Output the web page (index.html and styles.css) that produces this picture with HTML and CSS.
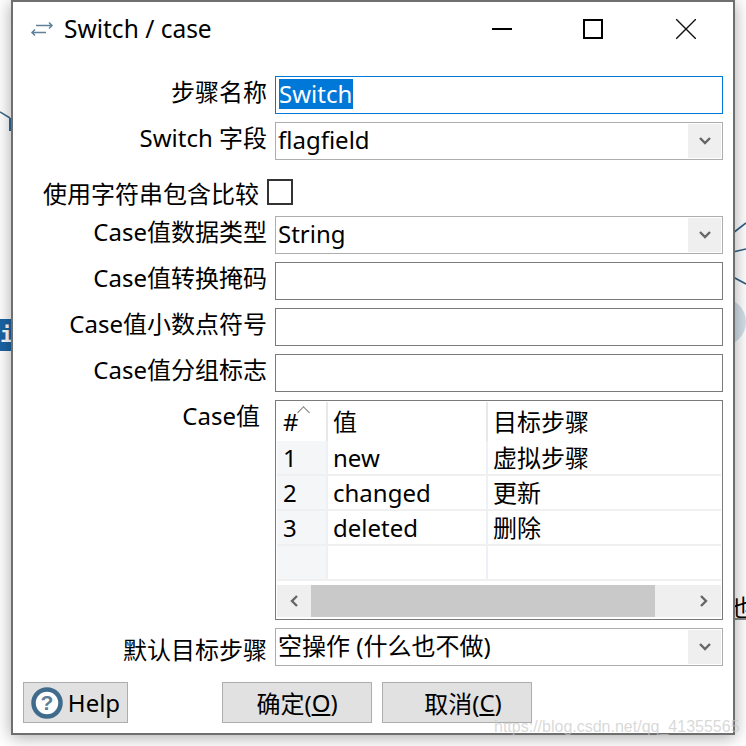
FILE: index.html
```html
<!DOCTYPE html>
<html lang="zh">
<head>
  <meta charset="UTF-8">
  <meta name="viewport" content="width=device-width, initial-scale=1.0">
  <title>Switch / case</title>
  <link rel="stylesheet" href="styles.css">
</head>
<body>
  <!-- bits of the canvas behind the dialog -->
  <svg class="canvas-lines" width="746" height="746" viewBox="0 0 746 746">
    <path d="M0 112 L10 118" stroke="#3d6a8c" stroke-width="1.5" fill="none"/>
    <rect x="9" y="118" width="3" height="13" fill="#2f6a96"/>
    <path d="M733 233 L746 223 M733 252 L746 249 M733 277 L746 284" stroke="#2f5f85" stroke-width="1.6" fill="none"/>
    <circle cx="722" cy="322" r="24" fill="#d3dfe8"/>
    <path d="M733 619 H746" stroke="#111" stroke-width="1"/>
  </svg>
  <div class="info-badge">i</div>
  <div class="canvas-label">也</div>

  <div class="dialog">
    <div class="title-bar">
      <svg class="title-icon" width="24" height="16" viewBox="0 0 24 16">
        <path d="M16 11.5 H2 M5 8.5 L2 11.5 L5 14.5" stroke="#5f8199" stroke-width="1.5" fill="none"/>
        <path d="M6 4.5 H22 M19 1.5 L22 4.5 L19 7.5" stroke="#5f8199" stroke-width="1.5" fill="none"/>
      </svg>
      <span class="title-text">Switch / case</span>
      <div class="win-buttons">
        <svg width="20" height="20" viewBox="0 0 20 20"><path d="M0 10 H20" stroke="#000" stroke-width="2"/></svg>
        <svg width="20" height="20" viewBox="0 0 20 20"><rect x="1" y="1" width="18" height="18" stroke="#000" stroke-width="2" fill="none"/></svg>
        <svg class="win-close" width="20" height="20" viewBox="0 0 20 20"><path d="M0 0 L20 20 M20 0 L0 20" stroke="#111" stroke-width="1.4"/></svg>
      </div>
    </div>

    <div class="form">
      <label class="form-label">步骤名称</label>
      <div class="field focused"><span class="selected-text">Switch</span></div>

      <label class="form-label">Switch 字段</label>
      <div class="field combo">flagfield<span class="combo-btn"><svg width="12" height="10" viewBox="0 0 12 10"><path d="M1 2 L6 7 L11 2" stroke="#666" stroke-width="2.4" fill="none"/></svg></span></div>

      <div class="check-row">
        <span>使用字符串包含比较</span>
        <span class="checkbox"></span>
      </div>

      <label class="form-label">Case值数据类型</label>
      <div class="field combo">String<span class="combo-btn"><svg width="12" height="10" viewBox="0 0 12 10"><path d="M1 2 L6 7 L11 2" stroke="#666" stroke-width="2.4" fill="none"/></svg></span></div>

      <label class="form-label">Case值转换掩码</label>
      <div class="field plain"></div>

      <label class="form-label">Case值小数点符号</label>
      <div class="field plain"></div>

      <label class="form-label">Case值分组标志</label>
      <div class="field plain"></div>

      <label class="form-label table-label">Case值</label>
      <div class="table-box">
        <table class="grid">
          <colgroup><col class="col-num"><col class="col-val"><col></colgroup>
          <thead>
            <tr><th class="sorted">#</th><th>值</th><th>目标步骤</th></tr>
          </thead>
          <tbody>
            <tr><td>1</td><td>new</td><td>虚拟步骤</td></tr>
            <tr><td>2</td><td>changed</td><td>更新</td></tr>
            <tr><td>3</td><td>deleted</td><td>删除</td></tr>
            <tr><td></td><td></td><td></td></tr>
          </tbody>
        </table>
        <div class="scrollbar">
          <span class="scroll-btn"><svg width="10" height="14" viewBox="0 0 10 14"><path d="M8 2 L3 7 L8 12" stroke="#666" stroke-width="2.4" fill="none"/></svg></span>
          <span class="scroll-thumb"></span>
          <span class="scroll-btn right"><svg width="10" height="14" viewBox="0 0 10 14"><path d="M2 2 L7 7 L2 12" stroke="#666" stroke-width="2.4" fill="none"/></svg></span>
        </div>
      </div>

      <label class="form-label default-label">默认目标步骤</label>
      <div class="field combo">空操作 (什么也不做)<span class="combo-btn"><svg width="12" height="10" viewBox="0 0 12 10"><path d="M1 2 L6 7 L11 2" stroke="#666" stroke-width="2.4" fill="none"/></svg></span></div>
    </div>

    <div class="button-bar">
      <button class="btn btn-help">
        <svg width="32" height="32" viewBox="0 0 32 32">
          <circle cx="16" cy="16" r="13.5" fill="#fff" stroke="#3f6b8c" stroke-width="4.5"/>
          <text x="16" y="23" text-anchor="middle" class="help-mark">?</text>
        </svg>
        Help
      </button>
      <button class="btn btn-main">确定(<u>O</u>)</button>
      <button class="btn btn-main btn-cancel">取消(<u>C</u>)</button>
    </div>
  </div>

  <div class="watermark">https://blog.csdn.net/qq_41355565</div>
</body>
</html>
```

FILE: styles.css
```css
html, body {
  margin: 0;
  padding: 0;
}
body {
  width: 746px;
  height: 746px;
  overflow: hidden;
  background: #fff;
  font-family: "Noto Sans", "Noto Sans CJK SC", sans-serif;
  font-size: 24px;
  color: #000;
  position: relative;
}
.canvas-lines {
  position: absolute;
  left: 0;
  top: 0;
}
.info-badge {
  position: absolute;
  left: 0;
  top: 319px;
  width: 12px;
  height: 32px;
  background: #1b64a5;
  color: #fff;
  font-family: "DejaVu Sans Mono", monospace;
  font-weight: bold;
  font-size: 22px;
  line-height: 32px;
  text-align: center;
}
.canvas-label {
  position: absolute;
  left: 731px;
  top: 592px;
  font-size: 23px;
  line-height: 30px;
}
.dialog {
  position: relative;
  box-sizing: border-box;
  width: 724px;
  height: 735px;
  margin-left: 11px;
  background: #fff;
  border: 2px solid #6f6f6f;
  box-shadow: 0 2px 16px rgba(0, 0, 0, 0.35);
  display: flex;
  flex-direction: column;
}
.title-bar {
  display: flex;
  align-items: center;
  height: 54px;
  padding-left: 17px;
}
.title-icon {
  margin-right: 10px;
}
.title-text {
  font-size: 24.5px;
  line-height: 54px;
}
.win-buttons {
  margin-left: auto;
  margin-right: 37px;
  display: flex;
  gap: 71px;
}
.win-close {
  margin-left: 2px;
}
.form {
  display: grid;
  grid-template-columns: 252px 448px;
  row-gap: 8px;
  margin-top: 20px;
  padding-left: 10px;
}
.form-label {
  text-align: right;
  padding-right: 8px;
  line-height: 32px;
  white-space: nowrap;
}
.default-label {
  padding-top: 6px;
}
.field {
  box-sizing: border-box;
  height: 38px;
  border: 1px solid #adadad;
  line-height: 33px;
  padding-left: 3px;
  position: relative;
}
.field.combo {
  padding-left: 2px;
}
.field.focused {
  border-color: #0078d7;
  line-height: 34px;
}
.field.plain {
  border-color: #7a7a7a;
}
.selected-text {
  display: inline-block;
  background: #0078d7;
  color: #fff;
  line-height: 30px;
  vertical-align: top;
  margin-top: 2px;
  padding-right: 1px;
}
.combo-btn {
  position: absolute;
  right: 1px;
  top: 1px;
  bottom: 1px;
  width: 33px;
  background: #efefef;
  display: flex;
  align-items: center;
  justify-content: center;
}
.check-row {
  box-sizing: border-box;
  grid-column: 1 / 3;
  height: 40px;
  padding-top: 8px;
  padding-left: 20px;
  display: flex;
  align-items: center;
  gap: 8px;
}
.checkbox {
  box-sizing: border-box;
  width: 26px;
  height: 26px;
  border: 2px solid #333;
}
.table-label {
  padding-right: 15px;
}
.table-box {
  box-sizing: border-box;
  height: 220px;
  border: 1px solid #7a7a7a;
  padding: 1px;
}
.grid {
  width: 100%;
  height: 179px;
  table-layout: fixed;
  border-collapse: collapse;
  margin-bottom: 4px;
}
.col-num {
  width: 50px;
}
.col-val {
  width: 160px;
}
.grid th, .grid td {
  font-weight: normal;
  text-align: left;
  padding: 1px 0 0 5px;
  white-space: nowrap;
  border-right: 2px solid #edf1f6;
  border-bottom: 2px solid #f0f0f0;
  height: 32px;
  line-height: 32px;
}
.grid td:first-child, .grid th:first-child {
  padding-left: 6px;
}
.grid td:first-child {
  background: #f5f6f8;
}
.grid th {
  height: 38px;
  border-bottom: 0;
  border-right-color: #e8e8e8;
}
.grid th:last-child, .grid td:last-child {
  border-right: 0;
}
.sorted {
  position: relative;
}
/* small caret over the # column */
.sorted::after {
  content: "";
  position: absolute;
  left: 22px;
  top: 6px;
  width: 8px;
  height: 8px;
  border-left: 1px solid #777;
  border-top: 1px solid #777;
  transform: rotate(45deg);
}
.scrollbar {
  display: flex;
  height: 32px;
  background: #efefef;
}
.scroll-btn {
  width: 34px;
  display: flex;
  align-items: center;
  justify-content: center;
}
.scroll-btn.right {
  margin-left: auto;
  width: 66px;
  padding-left: 32px;
  box-sizing: border-box;
}
.scroll-thumb {
  width: 344px;
  background: #c9c9c9;
}
.button-bar {
  display: flex;
  margin-top: 16px;
  padding-left: 10px;
}
.btn {
  box-sizing: border-box;
  height: 41px;
  border: 1px solid #adadad;
  background: #e1e1e1;
  font: inherit;
  color: #000;
  padding: 0;
  display: flex;
  align-items: center;
  justify-content: center;
}
.btn-help {
  width: 105px;
  gap: 5px;
  margin-right: 94px;
}
.btn-main {
  width: 150px;
  margin-right: 10px;
}
.btn-cancel {
  padding-left: 12px;
}
.help-mark {
  font-family: "Liberation Sans", sans-serif;
  font-weight: bold;
  font-size: 21px;
  fill: #5d8098;
}
.watermark {
  position: absolute;
  left: 494px;
  top: 717px;
  font-family: "Liberation Sans", sans-serif;
  font-size: 16px;
  line-height: 20px;
  color: rgba(200, 200, 200, 0.7);
  white-space: nowrap;
}
```
